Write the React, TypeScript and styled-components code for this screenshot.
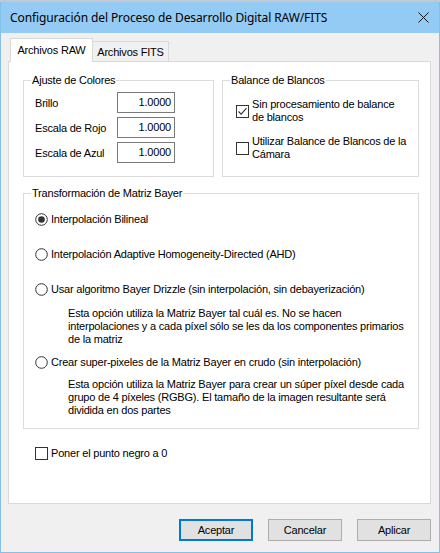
import React from 'react';
import styled, { createGlobalStyle } from 'styled-components';

const GlobalStyle = createGlobalStyle`
  html, body { margin: 0; padding: 0; background: #c4c9cf; }
  body {
    font-family: "Liberation Sans", Arial, sans-serif;
    font-size: 11px;
    letter-spacing: -0.2px;
    color: #000;
  }
  * { box-sizing: border-box; }
`;

const Window = styled.div`
  margin-top: 2px;
  width: 440px;
  height: 551px;
  border: 1px solid #86bfe9;
  border-top: none;
  background: #f0f0f0;
  display: flex;
  flex-direction: column;
`;

const TitleBar = styled.div`
  height: 31px;
  flex: none;
  background: #93cbf4;
  display: flex;
  align-items: center;
  justify-content: space-between;
  padding: 0 10px 0 9px;
  font-family: "Noto Sans", "Open Sans", sans-serif;
  font-size: 12px;
  letter-spacing: -0.1px;
  color: #000;
`;

const CloseIcon = styled.svg`
  width: 11px;
  height: 11px;
  display: block;
`;

const Body = styled.div`
  flex: 1;
  display: flex;
  flex-direction: column;
  padding: 5px 8px 11px 7px;
`;

const TabControl = styled.div`
  flex: 1;
  display: flex;
  flex-direction: column;
`;

const TabStrip = styled.div`
  display: flex;
  align-items: flex-end;
  height: 23px;
  padding-left: 2px;
`;

const Tab = styled.div<{ $active?: boolean }>`
  position: relative;
  z-index: ${p => (p.$active ? 1 : 0)};
  width: ${p => (p.$active ? 83 : 76)}px;
  height: ${p => (p.$active ? 24 : 20)}px;
  margin-bottom: ${p => (p.$active ? -1 : 0)}px;
  background: ${p => (p.$active ? '#fff' : '#f0f0f0')};
  border: 1px solid #d9d9d9;
  border-bottom: none;
  ${p => (!p.$active ? 'border-left: none;' : '')}
  display: flex;
  align-items: center;
  justify-content: center;
  padding-bottom: ${p => (p.$active ? 2 : 0)}px;
`;

const Panel = styled.div`
  flex: 1;
  background: #fff;
  border: 1px solid #d9d9d9;
  padding: 11px 11px 0 14px;
  display: flex;
  flex-direction: column;
`;

const TopRow = styled.div`
  display: flex;
  gap: 8px;
`;

const Group = styled.fieldset<{ $w?: number; $h?: number }>`
  margin: 0;
  min-width: 0;
  border: 1px solid #dcdcdc;
  ${p => (p.$w ? `width: ${p.$w}px;` : '')}
  ${p => (p.$h ? `height: ${p.$h}px;` : '')}
`;

const Legend = styled.legend<{ $ml: number }>`
  padding: 0 1px;
  margin-left: ${p => p.$ml}px;
  line-height: 14px;
`;

const ColorGrid = styled(Group)`
  padding: 5px 0 0 11px;
  display: grid;
  grid-template-columns: 82px 58px;
  grid-auto-rows: 21px;
  row-gap: 4px;
  align-items: center;
  align-content: start;
`;

const NumberBox = styled.div`
  height: 21px;
  border: 1px solid #7a7a7a;
  background: #fff;
  text-align: right;
  padding: 3px 3px 0 0;
  line-height: 13px;
`;

const CheckGroup = styled(Group)`
  padding: 11px 0 0 13px;
  display: flex;
  flex-direction: column;
  gap: 11px;
`;

const CheckRow = styled.label`
  display: flex;
  align-items: center;
  gap: 3px;
  line-height: 13px;
  white-space: nowrap;
`;

const BoxMark = styled.span`
  flex: none;
  width: 13px;
  height: 13px;
  border: 1px solid #333;
  background: #fff;
  display: flex;
  align-items: center;
  justify-content: center;
`;

const BayerGroup = styled(Group)`
  margin-top: 9px;
  padding: 13px 0 11px 11px;
  display: flex;
  flex-direction: column;
`;

const RadioRow = styled.label<{ $mt: number }>`
  display: flex;
  align-items: center;
  gap: 3px;
  line-height: 13px;
  white-space: nowrap;
  margin-top: ${p => p.$mt}px;
`;

const RadioIcon = styled.svg`
  flex: none;
  width: 13px;
  height: 13px;
  display: block;
`;

const Description = styled.div<{ $mt: number }>`
  margin-top: ${p => p.$mt}px;
  padding-left: 33px;
  line-height: 13px;
  white-space: nowrap;
`;

const BlackPointRow = styled(CheckRow)`
  margin: 18px 0 0 12px;
`;

const ButtonRow = styled.div`
  display: flex;
  justify-content: flex-end;
  gap: 15px;
  margin-top: 15px;
`;

const Button = styled.button<{ $default?: boolean }>`
  width: 74px;
  height: 22px;
  background: #e1e1e1;
  border: 1px solid ${p => (p.$default ? '#0078d7' : '#adadad')};
  box-shadow: ${p => (p.$default ? 'inset 0 0 0 1px #0078d7' : 'none')};
  font-family: "Liberation Sans", Arial, sans-serif;
  font-size: 11px;
  letter-spacing: -0.2px;
  color: #000;
  padding: 0;
`;

const Check = ({ checked }: { checked?: boolean }) => (
  <BoxMark>
    {checked && (
      <svg width="11" height="11" viewBox="0 0 11 11">
        <path d="M1.5 5.5 L4.2 8.2 L9.5 2.2" fill="none" stroke="#333" strokeWidth="1.1" />
      </svg>
    )}
  </BoxMark>
);

const Radio = ({ checked }: { checked?: boolean }) => (
  <RadioIcon viewBox="0 0 13 13">
    <circle cx="6.5" cy="6.5" r="5.8" fill="#fff" stroke="#333" strokeWidth="1" />
    {checked && <circle cx="6.5" cy="6.5" r="3.3" fill="#333" />}
  </RadioIcon>
);

export default function App() {
  return (
    <>
      <GlobalStyle />
      <Window>
        <TitleBar>
          <span>Configuración del Proceso de Desarrollo Digital RAW/FITS</span>
          <CloseIcon viewBox="0 0 11 11">
            <path d="M0.5 0.5 L10.5 10.5 M10.5 0.5 L0.5 10.5" stroke="#111" strokeWidth="1" />
          </CloseIcon>
        </TitleBar>
        <Body>
          <TabControl>
            <TabStrip>
              <Tab $active>Archivos RAW</Tab>
              <Tab>Archivos FITS</Tab>
            </TabStrip>
            <Panel>
              <TopRow>
                <ColorGrid $w={191} $h={104}>
                  <Legend $ml={-4}>Ajuste de Colores</Legend>
                  <span>Brillo</span>
                  <NumberBox>1.0000</NumberBox>
                  <span>Escala de Rojo</span>
                  <NumberBox>1.0000</NumberBox>
                  <span>Escala de Azul</span>
                  <NumberBox>1.0000</NumberBox>
                </ColorGrid>
                <CheckGroup $w={197} $h={104}>
                  <Legend $ml={-6}>Balance de Blancos</Legend>
                  <CheckRow>
                    <Check checked />
                    <span>Sin procesamiento de balance<br />de blancos</span>
                  </CheckRow>
                  <CheckRow>
                    <Check />
                    <span>Utilizar Balance de Blancos de la<br />Cámara</span>
                  </CheckRow>
                </CheckGroup>
              </TopRow>
              <BayerGroup>
                <Legend $ml={-4}>Transformación de Matriz Bayer</Legend>
                <RadioRow $mt={0}>
                  <Radio checked />
                  <span>Interpolación Bilineal</span>
                </RadioRow>
                <RadioRow $mt={22}>
                  <Radio />
                  <span>Interpolación Adaptive Homogeneity-Directed (AHD)</span>
                </RadioRow>
                <RadioRow $mt={22}>
                  <Radio />
                  <span>Usar algoritmo Bayer Drizzle (sin interpolación, sin debayerización)</span>
                </RadioRow>
                <Description $mt={11}>
                  Esta opción utiliza la Matriz Bayer tal cuál es. No se hacen<br />
                  interpolaciones y a cada píxel sólo se les da los componentes primarios<br />
                  de la matriz
                </Description>
                <RadioRow $mt={10}>
                  <Radio />
                  <span>Crear super-pixeles de la Matriz Bayer en crudo (sin interpolación)</span>
                </RadioRow>
                <Description $mt={9}>
                  Esta opción utiliza la Matriz Bayer para crear un súper píxel desde cada<br />
                  grupo de 4 píxeles (RGBG). El tamaño de la imagen resultante será<br />
                  dividida en dos partes
                </Description>
              </BayerGroup>
              <BlackPointRow>
                <Check />
                <span>Poner el punto negro a 0</span>
              </BlackPointRow>
            </Panel>
          </TabControl>
          <ButtonRow>
            <Button $default>Aceptar</Button>
            <Button>Cancelar</Button>
            <Button>Aplicar</Button>
          </ButtonRow>
        </Body>
      </Window>
    </>
  );
}
